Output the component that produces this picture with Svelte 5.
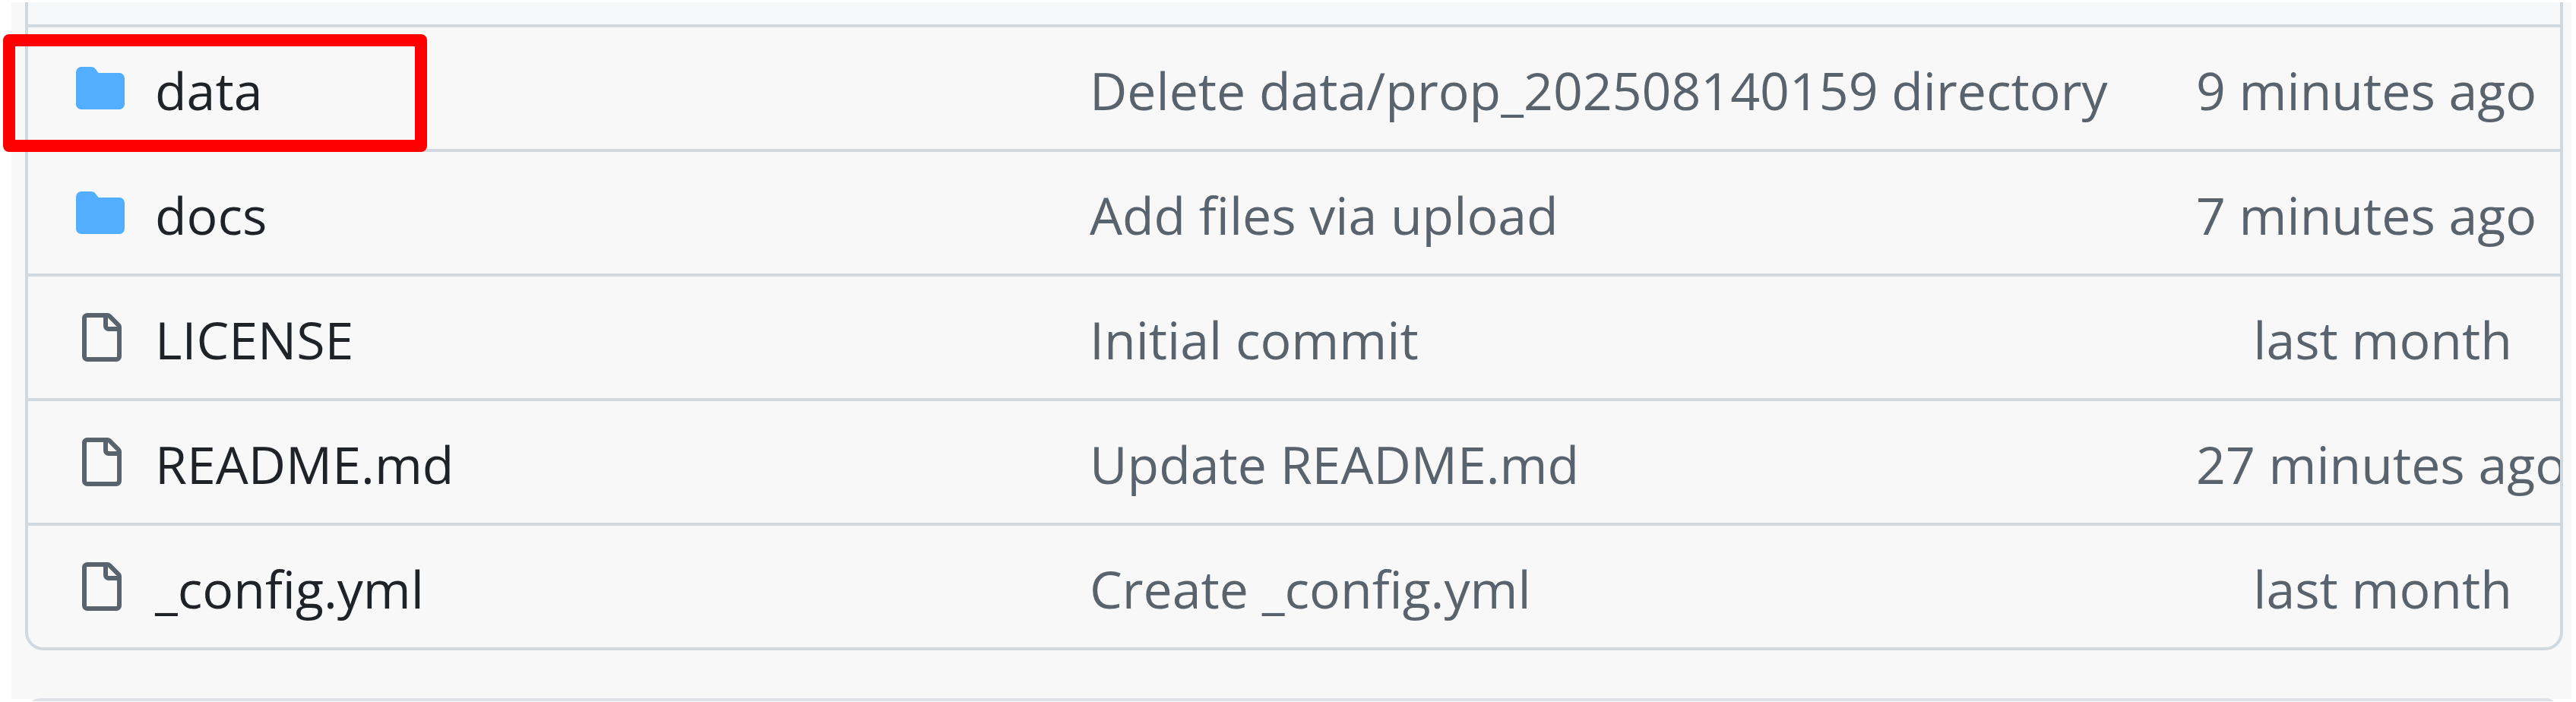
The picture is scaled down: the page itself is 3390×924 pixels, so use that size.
<script>
  const entries = [
    { kind: 'dir', name: 'data', message: 'Delete data/prop_202508140159 directory', age: '9 minutes ago' },
    { kind: 'dir', name: 'docs', message: 'Add files via upload', age: '7 minutes ago' },
    { kind: 'file', name: 'LICENSE', message: 'Initial commit', age: 'last month' },
    { kind: 'file', name: 'README.md', message: 'Update README.md', age: '27 minutes ago' },
    { kind: 'file', name: '_config.yml', message: 'Create _config.yml', age: 'last month' },
  ];
  const paths = {
    dir: 'M1.75 1A1.75 1.75 0 0 0 0 2.75v10.5C0 14.216.784 15 1.75 15h12.5A1.75 1.75 0 0 0 16 13.25v-8.5A1.75 1.75 0 0 0 14.25 3H7.5a.25.25 0 0 1-.2-.1l-.9-1.2C6.07 1.26 5.55 1 5 1H1.75Z',
    file: 'M2 1.75C2 .784 2.784 0 3.75 0h6.586c.464 0 .909.184 1.237.513l2.914 2.914c.329.328.513.773.513 1.237v9.586A1.75 1.75 0 0 1 13.25 16h-9.5A1.75 1.75 0 0 1 2 14.25Zm1.75-.25a.25.25 0 0 0-.25.25v12.5c0 .138.112.25.25.25h9.5a.25.25 0 0 0 .25-.25V6h-2.75A1.75 1.75 0 0 1 9 4.25V1.5Zm6.75.062V4.25c0 .138.112.25.25.25h2.688l-.011-.013-2.914-2.914-.013-.011Z',
  };
</script>

<main>
  <div class="page">
    <div class="frame">
      <div class="panel">
        <div class="panel-head"></div>
        <table>
          <colgroup>
            <col class="col-name" />
            <col />
            <col class="col-age" />
          </colgroup>
          <tbody>
            {#each entries as entry}
              <tr>
                <td class="name">
                  <div class="entry">
                    <svg class={entry.kind} viewBox="0 0 16 16" aria-hidden="true"><path d={paths[entry.kind]} /></svg>
                    <a href="#{entry.name}">{entry.name}</a>
                  </div>
                </td>
                <td class="message"><a href="#commit-{entry.name}">{entry.message}</a></td>
                <td class="age">{entry.age}</td>
              </tr>
            {/each}
          </tbody>
        </table>
      </div>
      <div class="highlight"></div>
    </div>
  </div>
  <div class="next-panel"></div>
</main>

<style>
  :global(body) {
    background: #fff;
  }
  main {
    padding: 3px 6px 0 15px;
    font-family: 'Segoe UI', 'Open Sans', sans-serif;
    font-size: 68px;
    font-variant-ligatures: none;
    line-height: 96px;
    color: #59636e;
  }
  .page {
    padding: 0 11px 64px 18px;
    background: #f8f8f8;
  }
  .frame {
    position: relative;
  }
  .panel {
    overflow: hidden;
    border: solid #d1d9e0;
    border-width: 0 4px 4px;
    border-radius: 0 0 24px 24px;
  }
  .panel-head {
    height: 29px;
    background: #f6f8fa;
  }
  table {
    width: 100%;
    table-layout: fixed;
    border-collapse: separate;
    border-spacing: 0;
  }
  .col-name {
    width: 1397px;
  }
  .col-age {
    width: 479px;
  }
  td {
    box-sizing: border-box;
    height: 164px;
    padding: 6px 0 0;
    border-top: 4px solid #d1d9e0;
    vertical-align: middle;
    white-space: nowrap;
  }
  .name {
    padding: 0 0 0 63px;
  }
  .entry {
    display: flex;
    align-items: center;
    gap: 40px;
  }
  .entry a {
    padding-top: 6px;
  }
  .age {
    padding-right: 63px;
    text-align: right;
  }
  svg {
    width: 64px;
    height: 64px;
    flex: none;
  }
  .dir {
    fill: #54aeff;
  }
  .file {
    fill: #59636e;
  }
  a {
    color: inherit;
    text-decoration: none;
  }
  .name a {
    color: #1f2328;
  }
  .highlight {
    position: absolute;
    top: 42px;
    left: -29px;
    box-sizing: border-box;
    width: 558px;
    height: 155px;
    border: 16px solid #f00;
    border-radius: 8px;
  }
  .next-panel {
    height: 4px;
    margin: -1px 24px 0 28px;
    border-radius: 12px 12px 0 0 / 4px 4px 0 0;
    background: #dde1e8;
  }
</style>
